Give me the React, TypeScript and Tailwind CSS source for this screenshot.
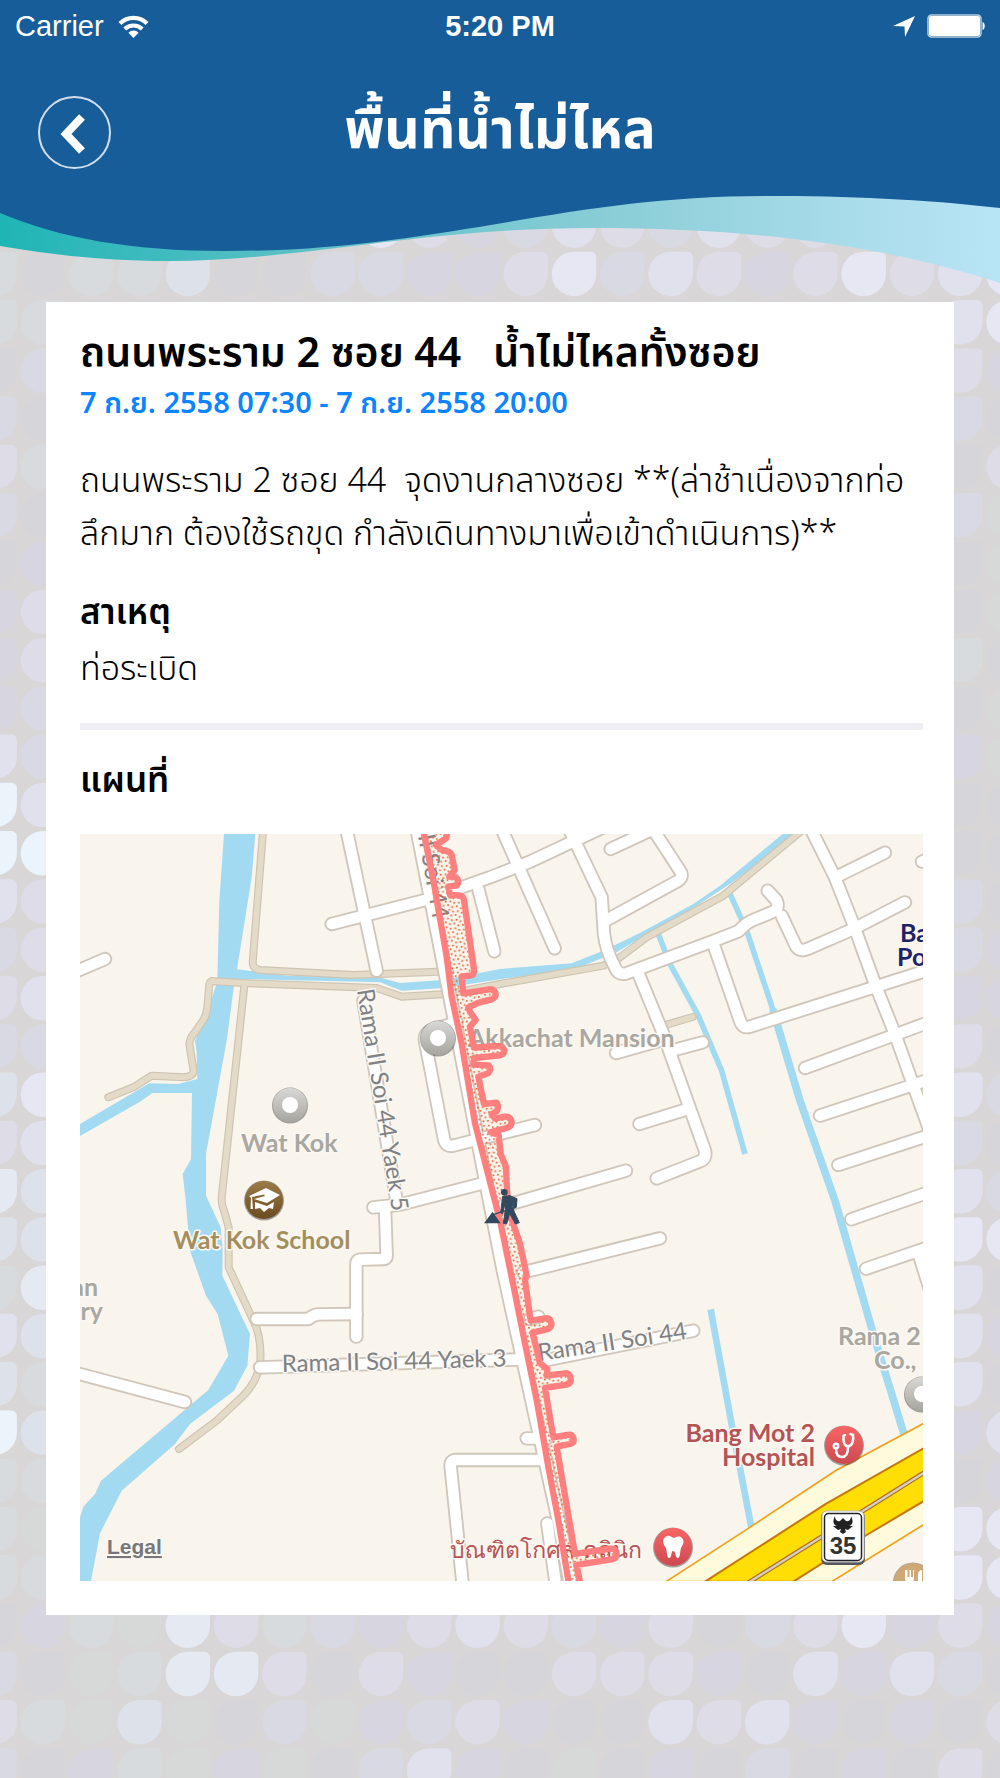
import { useId } from 'react';
import type { ReactNode } from 'react';

const TILE_COLORS: Record<string, string> = {
  a: '#d7d8d8',
  b: '#d6d6da',
  c: '#d7d5df',
  d: '#d9d9e3',
  e: '#dddce7',
  f: '#e1e1ee',
  g: '#e7e6f3',
  h: '#ebf3fb',
  i: '#d8dbde',
  j: '#dde1e9',
  k: '#e5e9f2',
};

const TILE_ROWS = [
  'aabbaabbgecdfedfeefebb',
  'ibiijbbddccegdfecegefg',
  'iibbabbaabbbabbabbabfg',
  'bdbbabbaabbbabbabbabec',
  'dbbbabbaabbbabbabbabdb',
  'eibbabbaabbbabbabbabbe',
  'dbbbabbaabbbabbabbabda',
  'bcbbabbaabbbabbabbabba',
  'cebbabbaabbbabbabbabba',
  'cebbabbaabbbabbabbabib',
  'cdbbabbaabbbabbabbabba',
  'fdbbabbaabbbabbabbabca',
  'hfbbabbaabbbabbabbabbb',
  'hhbbabbaabbbabbabbabbb',
  'febbabbaabbbabbabbabdb',
  'debbabbaabbbabbabbabdc',
  'efbbabbaabbbabbabbabcc',
  'ddbbabbaabbbabbabbabeb',
  'jgbbabbaabbbabbabbabfd',
  'efbbabbaabbbabbabbabdb',
  'kjbbabbaabbbabbabbabfd',
  'jjbbabbaabbbabbabbabgg',
  'ikbbabbaabbbabbabbabfb',
  'fjbbabbaabbbabbabbabfc',
  'jibbabbaabbbabbabbabfb',
  'hjbbabbaabbbabbabbabcf',
  'iibbabbaabbbabbabbabbc',
  'iabbabbaabbbabbabbabgg',
  'iibbabbaabbbabbabbabgg',
  'bciakeidcefedcebdegcec',
  'dbaikkebecbbeeecbfcfdb',
  'eiajabdacdecbbfefcbcbe',
  'dbciacabdfcbabcbdbcbeb',
];

function Backdrop() {
  const pitch = 48.28;
  return (
    <svg
      className="absolute left-0 top-0 h-full w-full"
      viewBox="0 0 1000 1778"
      preserveAspectRatio="xMidYMin slice"
      aria-hidden
    >
      <defs>
        <path
          id="tile"
          d="M22.5 0H39A5.5 5.5 0 0 1 44.5 5.5V22.5A22.2 22.2 0 0 1 22.5 44.5A22.2 22.2 0 0 1 0 22.5A22.2 22.2 0 0 1 22.5 0Z"
        />
      </defs>
      {TILE_ROWS.map((row, r) =>
        row.split('').map((key, c) => (
          <use
            key={`${r}-${c}`}
            href="#tile"
            x={-27.6 + c * pitch}
            y={203.4 + r * pitch}
            fill={TILE_COLORS[key]}
          />
        )),
      )}
    </svg>
  );
}

function HeaderWave() {
  const id = useId();
  return (
    <svg
      className="absolute inset-0 h-full w-full"
      viewBox="0 0 1000 302"
      preserveAspectRatio="none"
      aria-hidden
    >
      <defs>
        <linearGradient id={id} x1="0" x2="1" y1="0" y2="0">
          <stop offset="0" stopColor="#1fb5b5" />
          <stop offset="0.3" stopColor="#5cc0c6" />
          <stop offset="0.6" stopColor="#88cdd6" />
          <stop offset="0.85" stopColor="#a9dcea" />
          <stop offset="1" stopColor="#b8e5f6" />
        </linearGradient>
      </defs>
      <path
        d="M0 200V246C60 256 110 261 169 261C300 261 420 228 593 228C760 228 890 247 1000 283V190Z"
        fill={`url(#${id})`}
      />
      <path
        d="M0 0H1000V208C920 199 850 196 765 196C560 196 440 251 225 251C130 251 60 238 0 213Z"
        fill="#175d9a"
      />
    </svg>
  );
}

function StatusBar() {
  return (
    <div className="relative grid h-[52px] grid-cols-3 items-center px-[15px] font-['Liberation_Sans',sans-serif] text-[29px] leading-[52px] text-white">
      <div className="flex items-center gap-[14px]">
        <span>Carrier</span>
        <svg className="h-[23px] w-[31px]" viewBox="0 0 31 23" fill="none" stroke="currentColor" strokeWidth="4.2" aria-hidden>
          <path d="M2 8.5A19 19 0 0 1 29 8.5" />
          <path d="M6.8 14A12.5 12.5 0 0 1 24.2 14" />
          <path d="M15.5 23L10.4 17.8A7 7 0 0 1 20.6 17.8Z" fill="currentColor" stroke="none" />
        </svg>
      </div>
      <span className="text-center font-bold">5:20 PM</span>
      <div className="flex items-center justify-end gap-3">
        <svg className="h-[21px] w-[22px]" viewBox="0 0 22 21" fill="currentColor" aria-hidden>
          <path d="M22 0L12 21L11.5 10.5L0 10Z" />
        </svg>
        <svg className="h-6 w-[58px]" viewBox="0 0 58 24" fill="none" aria-hidden>
          <rect x="1" y="1" width="53" height="22" rx="3.5" stroke="#fff" strokeOpacity="0.7" strokeWidth="1.5" />
          <rect x="2" y="2" width="51" height="20" rx="2" fill="#fff" />
          <path d="M55.5 8C58.5 9 58.5 15 55.5 16Z" fill="#fff" />
        </svg>
      </div>
    </div>
  );
}

type Road = { d: string; w?: number };

const WHITE_ROADS: Road[] = [
  { d: 'M-20 416L75 375' },
  { d: 'M798 -20L890 410' },
  { d: 'M755 270L1040 197L1230 130L1350 83L1580 -25' },
  { d: 'M1195 165L1243 352' },
  { d: 'M1263 -20L1424 343' },
  { d: 'M1465 -20L1565 190L1572 300Q1578 350 1605 400Q1615 425 1640 418L1890 325L1975 292Q2000 265 2020 258L2075 235Q2100 225 2090 200L2063 170' },
  { d: 'M1580 258L1795 140Q1812 128 1800 110L1715 -20' },
  { d: 'M1592 45L1720 -15' },
  { d: 'M2105 245L2145 330Q2155 355 2180 346L2320 285L2475 205' },
  { d: 'M2190 -20L2265 130L2320 270L2385 450L2445 600L2495 740L2560 920' },
  { d: 'M2270 128L2415 56' },
  { d: 'M2526 83L2560 70' },
  { d: 'M1675 418L1750 600L1875 950Q1880 975 1860 982L1730 1033' },
  { d: 'M1608 657L1740 620' },
  { d: 'M1775 650L1868 625' },
  { d: 'M1678 870L1820 826' },
  { d: 'M1902 335L1980 560Q1988 585 2010 578L2560 403' },
  { d: 'M2175 702L2560 560' },
  { d: 'M2220 845L2560 733' },
  { d: 'M2275 993L2560 900' },
  { d: 'M2314 1156L2560 1070' },
  { d: 'M2358 1304L2560 1235' },
  { d: 'M2515 1255L2560 1400' },
  { d: 'M1365 873L1120 935Q1098 940 1092 915L1035 620Q1032 600 1050 590L1130 565' },
  { d: 'M850 500L948 1090' },
  { d: 'M1638 1010L1240 1125' },
  { d: 'M880 1120L960 1112L1220 1045' },
  { d: 'M915 1120L920 1265Q920 1275 910 1275L840 1277Q829 1278 829 1290L829 1508' },
  { d: 'M530 1455L685 1455Q700 1442 715 1441L830 1440' },
  { d: 'M-20 1615L315 1704' },
  { d: 'M540 1600L1330 1576' },
  { d: 'M1400 1878L1125 1878Q1110 1880 1112 1898L1150 2270' },
  { d: 'M1390 1580L1840 1490' },
  { d: 'M1330 1315L1740 1213' },
  { d: 'M1340 1813L1400 1813' },
  { d: 'M1375 1448L1350 1455' },
  { d: 'M1402 2068L1430 2270' },
  { d: 'M1010 -20L1120 540L1215 1030L1270 1310L1345 1650L1400 1900L1440 2080L1475 2270', w: 46 },
];

const PARK_ROADS: Road[] = [
  { d: 'M550 -20L518 385Q518 405 540 408L820 423L1110 412' },
  { d: 'M85 790L160 760L215 725L310 730Q345 728 340 705L328 630Q330 610 345 595L372 555Q380 540 382 520L388 450Q392 438 405 442L490 447L890 462L965 488L1100 480L1260 450L1570 395L1620 370L1700 310L1930 185L2165 -10' },
  { d: 'M493 455L425 1090Q425 1115 432 1130L446 1180L446 1300L520 1460Q545 1510 541 1580Q535 1640 490 1685L410 1760L297 1845' },
  { d: 'M1750 575L1838 549' },
];

const STREAMS: Road[] = [
  { d: 'M1735 300L1770 390L1855 545L1925 710L1995 960', w: 17 },
  { d: 'M1948 175L2000 290L2080 530', w: 17 },
  { d: 'M2078 525L2160 800L2265 1100L2380 1500L2475 1810', w: 23 },
  { d: 'M1892 1426L1960 1798L2016 2090', w: 20 },
];

const OUTAGE_AREA =
  'M1028 -20L1060 138L1100 368L1115 488L1145 628L1185 868L1262 1168L1305 1378L1335 1528L1370 1698L1405 1898L1435 2058L1470 2270' +
  'L1505 2270L1490 2193L1595 2176Q1612 2172 1610 2158Q1606 2142 1590 2144L1485 2160L1430 1838L1470 1830Q1484 1826 1480 1812Q1476 1800 1462 1803L1420 1810' +
  'L1395 1662L1460 1652Q1474 1648 1472 1634Q1470 1616 1454 1618L1400 1625L1402 1605L1380 1588L1358 1496L1400 1486Q1416 1482 1414 1467Q1410 1450 1396 1453L1352 1460' +
  'L1335 1338L1340 1325L1320 1228L1285 1128L1280 1048L1278 998L1262 960L1256 903L1232 895L1280 882Q1298 876 1294 860Q1288 846 1274 848L1245 854L1235 840L1250 832Q1258 818 1250 806L1212 810' +
  'L1195 728L1224 718Q1236 706 1226 694L1180 692L1182 672L1260 664Q1276 658 1272 646Q1266 634 1252 636L1182 641L1170 578L1187 558L1170 533L1165 520L1196 506L1235 496Q1250 490 1246 476Q1240 464 1228 466L1150 478' +
  'L1145 428L1174 424Q1184 420 1182 406L1152 198Q1150 186 1138 184L1110 183L1105 158L1130 155Q1140 142 1128 130L1108 128L1124 108L1115 62Q1108 50 1085 48L1068 33L1098 13L1105 -20Z';

function Pin({ x, y, r = 20, fill, children }: { x: number; y: number; r?: number; fill: string; children: ReactNode }) {
  return (
    <g transform={`translate(${x} ${y})`}>
      <circle r={r} fill="#000" fillOpacity="0.35" cy="0.6" />
      <circle r={r - 1} fill={fill} />
      {children}
    </g>
  );
}

function Label({ children, ...rest }: React.SVGProps<SVGTextElement>) {
  return (
    <text stroke="#fbf8f2" strokeWidth="3" strokeLinejoin="round" paintOrder="stroke" {...rest}>
      {children}
    </text>
  );
}

function OutageMap() {
  return (
    <svg
      className="block h-auto w-full bg-[#f9f4ec] font-['Lato','Noto_Sans_Thai_Looped','Noto_Sans',sans-serif]"
      viewBox="0 0 843 747"
      role="group"
      aria-label="แผนที่"
    >
      <defs>
        <linearGradient id="pinGray" x1="0" x2="0" y1="0" y2="1">
          <stop offset="0" stopColor="#d9d8d5" />
          <stop offset="1" stopColor="#a6a59f" />
        </linearGradient>
        <linearGradient id="pinBrown" x1="0" x2="0" y1="0" y2="1">
          <stop offset="0" stopColor="#9c7b49" />
          <stop offset="1" stopColor="#694c1f" />
        </linearGradient>
        <linearGradient id="pinRed" x1="0" x2="0" y1="0" y2="1">
          <stop offset="0" stopColor="#fb6464" />
          <stop offset="1" stopColor="#cb4a50" />
        </linearGradient>
        <pattern id="dots" width="26" height="26" patternUnits="userSpaceOnUse" patternTransform="rotate(8)">
          <rect x="3" y="3" width="5" height="5" fill="#e8602c" />
          <rect x="16" y="7" width="5" height="5" fill="#e8602c" />
          <rect x="8" y="17" width="5" height="5" fill="#e8602c" />
          <rect x="20" y="20" width="5" height="5" fill="#e8602c" />
        </pattern>
      </defs>

      <g transform="scale(0.33333)" fill="none" strokeLinecap="round" strokeLinejoin="round">
        <g fill="#a2daf2">
          <path d="M432 0H526L515 130L488 300L471 405L462 455L440 620L378 960V1085L422 1180L428 1250L427 1325L510 1500L502 1595L462 1670L330 1770L285 1830L125 1970L60 2098L33 2241H0V2050L10 2018L45 1980L63 1940L385 1668L445 1565L413 1440L378 1385L330 1250L317 1098L308 1020L333 975L336 777H217L180 803L0 906V870L208 748L295 750L352 735L350 655L345 620L380 545L412 440L418 200Z" />
          <path d="M468 405L565 418L620 425L905 432L960 447L1090 438L1260 405L1475 388L1570 350L1690 292L1840 210L1920 155L2108 0H2150L1950 150L1850 215L1700 300L1610 355L1485 405L1260 436L1090 462L965 470L900 445L462 434Z" />
        </g>
        <g stroke="#a2daf2" strokeLinecap="butt">
          {STREAMS.map((s) => (
            <path key={s.d} d={s.d} strokeWidth={s.w} />
          ))}
        </g>

        <g stroke="#cdc4b1" strokeWidth="24">
          {PARK_ROADS.map((p) => (
            <path key={p.d} d={p.d} />
          ))}
        </g>
        <g stroke="#e3dac8" strokeWidth="17">
          {PARK_ROADS.map((p) => (
            <path key={p.d} d={p.d} />
          ))}
        </g>

        <g stroke="#d0c6ba">
          {WHITE_ROADS.map((p) => (
            <path key={p.d} d={p.d} strokeWidth={p.w ?? 43} />
          ))}
        </g>
        <g stroke="#fff">
          {WHITE_ROADS.map((p) => (
            <path key={p.d} d={p.d} strokeWidth={(p.w ?? 43) - 11} />
          ))}
        </g>

        <path d="M1758 2243L1990 2093L2270 1908L2550 1758V2060L2255 2243Z" fill="#fdfbdc" stroke="#f2a01a" strokeWidth="5" />
        <path d="M1875 2243L2240 2008L2550 1832V1990L2360 2103L2140 2243Z" fill="#ffde05" stroke="#c5760c" strokeWidth="6" />
        <path d="M2005 2246L2550 1905" stroke="#b06a10" strokeWidth="14" />
        <path d="M2005 2246L2550 1905" stroke="#d5d0c8" strokeWidth="7" />
      </g>

      <g fill="#808184" fontSize="24">
        <Label transform="translate(277 156) rotate(81)">Rama II Soi 44 Yaek 5</Label>
        <Label transform="translate(353 86) rotate(80)" textAnchor="end">II Soi 44</Label>
        <Label transform="translate(202 538) rotate(-1.4)">Rama II Soi 44 Yaek 3</Label>
        <Label transform="translate(459 527) rotate(-8.5)">Rama II Soi 44</Label>
      </g>

      <g fontSize="25" fontWeight="bold">
        <g fill="#a9a7a0">
          <Label x="388" y="213">Akkachat Mansion</Label>
          <Label x="161" y="318">Wat Kok</Label>
          <Label x="18" y="462" textAnchor="end">an</Label>
          <Label x="23" y="486" textAnchor="end">ry</Label>
          <Label x="758" y="511">Rama 2</Label>
          <Label x="794" y="535">Co.,</Label>
        </g>
        <Label x="93" y="415" fill="#a38e5d">Wat Kok School</Label>
        <g fill="#b55454" textAnchor="end">
          <Label x="735" y="608">Bang Mot 2</Label>
          <Label x="735" y="632">Hospital</Label>
        </g>
        <g fill="#1f2266">
          <Label x="820" y="108">Ba</Label>
          <Label x="817" y="132">Po</Label>
        </g>
      </g>
      <Label x="370" y="724" fontSize="23" fill="#b55454" className="font-['Loma','Noto_Sans',sans-serif]">
        บัณฑิตโกศล คลินิก
      </Label>

      <Pin x={358} y={204} r={18} fill="url(#pinGray)">
        <circle r="8" fill="#fff" />
      </Pin>

      <g transform="scale(0.33333)">
        <path d={OUTAGE_AREA} fill="url(#dots)" stroke="#ff7f7f" strokeWidth="19" strokeLinejoin="round" />
        {/* walking person with dig pile */}
        <g fill="#34495e">
          <path d="M1212 1168L1238 1133L1262 1168Z" />
          <circle cx="1273" cy="1075" r="10" />
          <path d="M1268 1087L1290 1085L1311 1094L1309 1120L1300 1124L1302 1096L1297 1118L1304 1136L1318 1166L1306 1170L1289 1138L1280 1170L1270 1168L1276 1128L1274 1110L1268 1140L1262 1136Z" stroke="#34495e" strokeWidth="3" strokeLinejoin="round" />
          <path d="M1240 1142L1275 1130" stroke="#34495e" strokeWidth="4" />
        </g>
      </g>

      <Pin x={210} y={271} r={18} fill="url(#pinGray)">
        <circle r="8" fill="#fff" />
      </Pin>
      <Pin x={842} y={560} r={18} fill="url(#pinGray)">
        <circle r="8" fill="#fff" />
      </Pin>
      <Pin x={184} y={366} fill="url(#pinBrown)">
        <path d="M-15 -4L2 -12L16 -5L3 3L-10 -1L1 -4L0 -5.5L-12 -3L-11 9H-13.5L-13 -2Z" fill="#fff" />
        <path d="M-9 2L3 6L10 2L9 9L5 8L0 12L-4 8L-9 9Z" fill="#fff" />
      </Pin>
      <Pin x={764} y={611} fill="url(#pinRed)">
        <g fill="none" stroke="#fff" strokeWidth="2.5" strokeLinecap="round">
          <path d="M1 -10L-0.5 -9C-1 -2 1 1 4 1.5C8 1 10 -4 9 -10L6.5 -11" />
          <path d="M4 2C4 9 2 12 -2 12C-6 12 -8 9 -8 4" />
          <circle cx="-8" cy="1" r="2.2" />
        </g>
      </Pin>
      <Pin x={593} y={713} fill="url(#pinRed)">
        <path d="M-6 -11C-3 -12 -1 -9 1 -9C3 -10 6 -12 9 -9C12 -6 10 -2 8 1C7 5 7 11 5 11C2 11 3 4 0 4C-2 4 -1 11 -4 11C-6 11 -6 5 -7 1C-10 -3 -12 -8 -6 -11Z" fill="#fff" />
      </Pin>
      <Pin x={833} y={748} fill="#cfa878">
        <path d="M-8 -12V-4Q-8 0 -5 0V6H-2V0Q1 0 1 -4V-12H0V-5H-2V-12H-3.5V-5H-5.5V-12ZM5 6V-8Q6 -12 9 -12V6Z" fill="#fff" />
      </Pin>

      <g>
        <rect x="741" y="677" width="44" height="54" rx="6" fill="#55575c" />
        <rect x="742" y="677" width="42" height="51" rx="5" fill="#fff" stroke="#b9bbbf" strokeWidth="1" />
        <rect x="744.5" y="679.5" width="37" height="47" rx="4" fill="#fff" stroke="#222" strokeWidth="1.5" />
        <path d="M755 682Q751 690 757 692L753 692L758 696L761 695L760 698L763 700L766 698L765 695L768 696L773 692L769 692Q775 690 771 682Q771 688 766 687L763 684L760 687Q755 688 755 682Z" fill="#222" />
        <text x="763" y="720" textAnchor="middle" fontSize="24" fontWeight="bold" fill="#333" className="font-['Liberation_Sans',sans-serif]">
          35
        </text>
      </g>

      <a href="#legal">
        <Label x="27" y="720" fontSize="21" fill="#77777a" textDecoration="underline" className="font-['Liberation_Sans',sans-serif] font-bold">
          Legal
        </Label>
      </a>
    </svg>
  );
}

export default function App() {
  return (
    <div className="relative min-h-screen overflow-hidden bg-[#d8d6d6] pb-[162px] font-['Noto_Sans_Thai','Noto_Sans',sans-serif] text-black">
      <Backdrop />

      <header className="relative h-[302px]">
        <HeaderWave />
        <StatusBar />
        <div className="relative grid h-[160px] grid-cols-[1fr_auto_1fr] items-center px-[38px] text-white">
          <button type="button" aria-label="Back" className="h-[73px] w-[73px] rounded-full border-2 border-white/80">
            <svg viewBox="0 0 69 69" fill="none" stroke="currentColor" strokeWidth="8" aria-hidden>
              <path d="M42 19L26 36L42 53" />
            </svg>
          </button>
          <h1 className="text-[55px] font-bold leading-[84px]">พื้นที่น้ำไม่ไหล</h1>
        </div>
      </header>

      <main className="relative mx-[46px] bg-white pb-[34px] pl-[34px] pr-[31px] pt-6">
        <h2 className="whitespace-pre-wrap text-[41px] font-semibold leading-[56px]">
          {'ถนนพระราม 2 ซอย 44   น้ำไม่ไหลทั้งซอย'}
        </h2>
        <p className="text-[29px] font-semibold leading-[44px] text-[#0a84ff]">
          7 ก.ย. 2558 07:30 - 7 ก.ย. 2558 20:00
        </p>
        <p className="mt-[29px] whitespace-pre-line text-[34px] font-light leading-[53px]">
          {'ถนนพระราม 2 ซอย 44 \u00a0จุดงานกลางซอย **(ล่าช้าเนื่องจากท่อ\nลึกมาก ต้องใช้รถขุด กำลังเดินทางมาเพื่อเข้าดำเนินการ)**'}
        </p>
        <h3 className="mt-[25px] text-[35px] font-semibold leading-[56px]">สาเหตุ</h3>
        <p className="text-[34px] font-light leading-[56px]">ท่อระเบิด</p>
        <hr className="mt-[25px] h-[7px] border-0 bg-[#efeef4]" />
        <h3 className="mb-6 mt-6 text-[35px] font-semibold leading-[56px]">แผนที่</h3>
        <OutageMap />
      </main>
    </div>
  );
}
